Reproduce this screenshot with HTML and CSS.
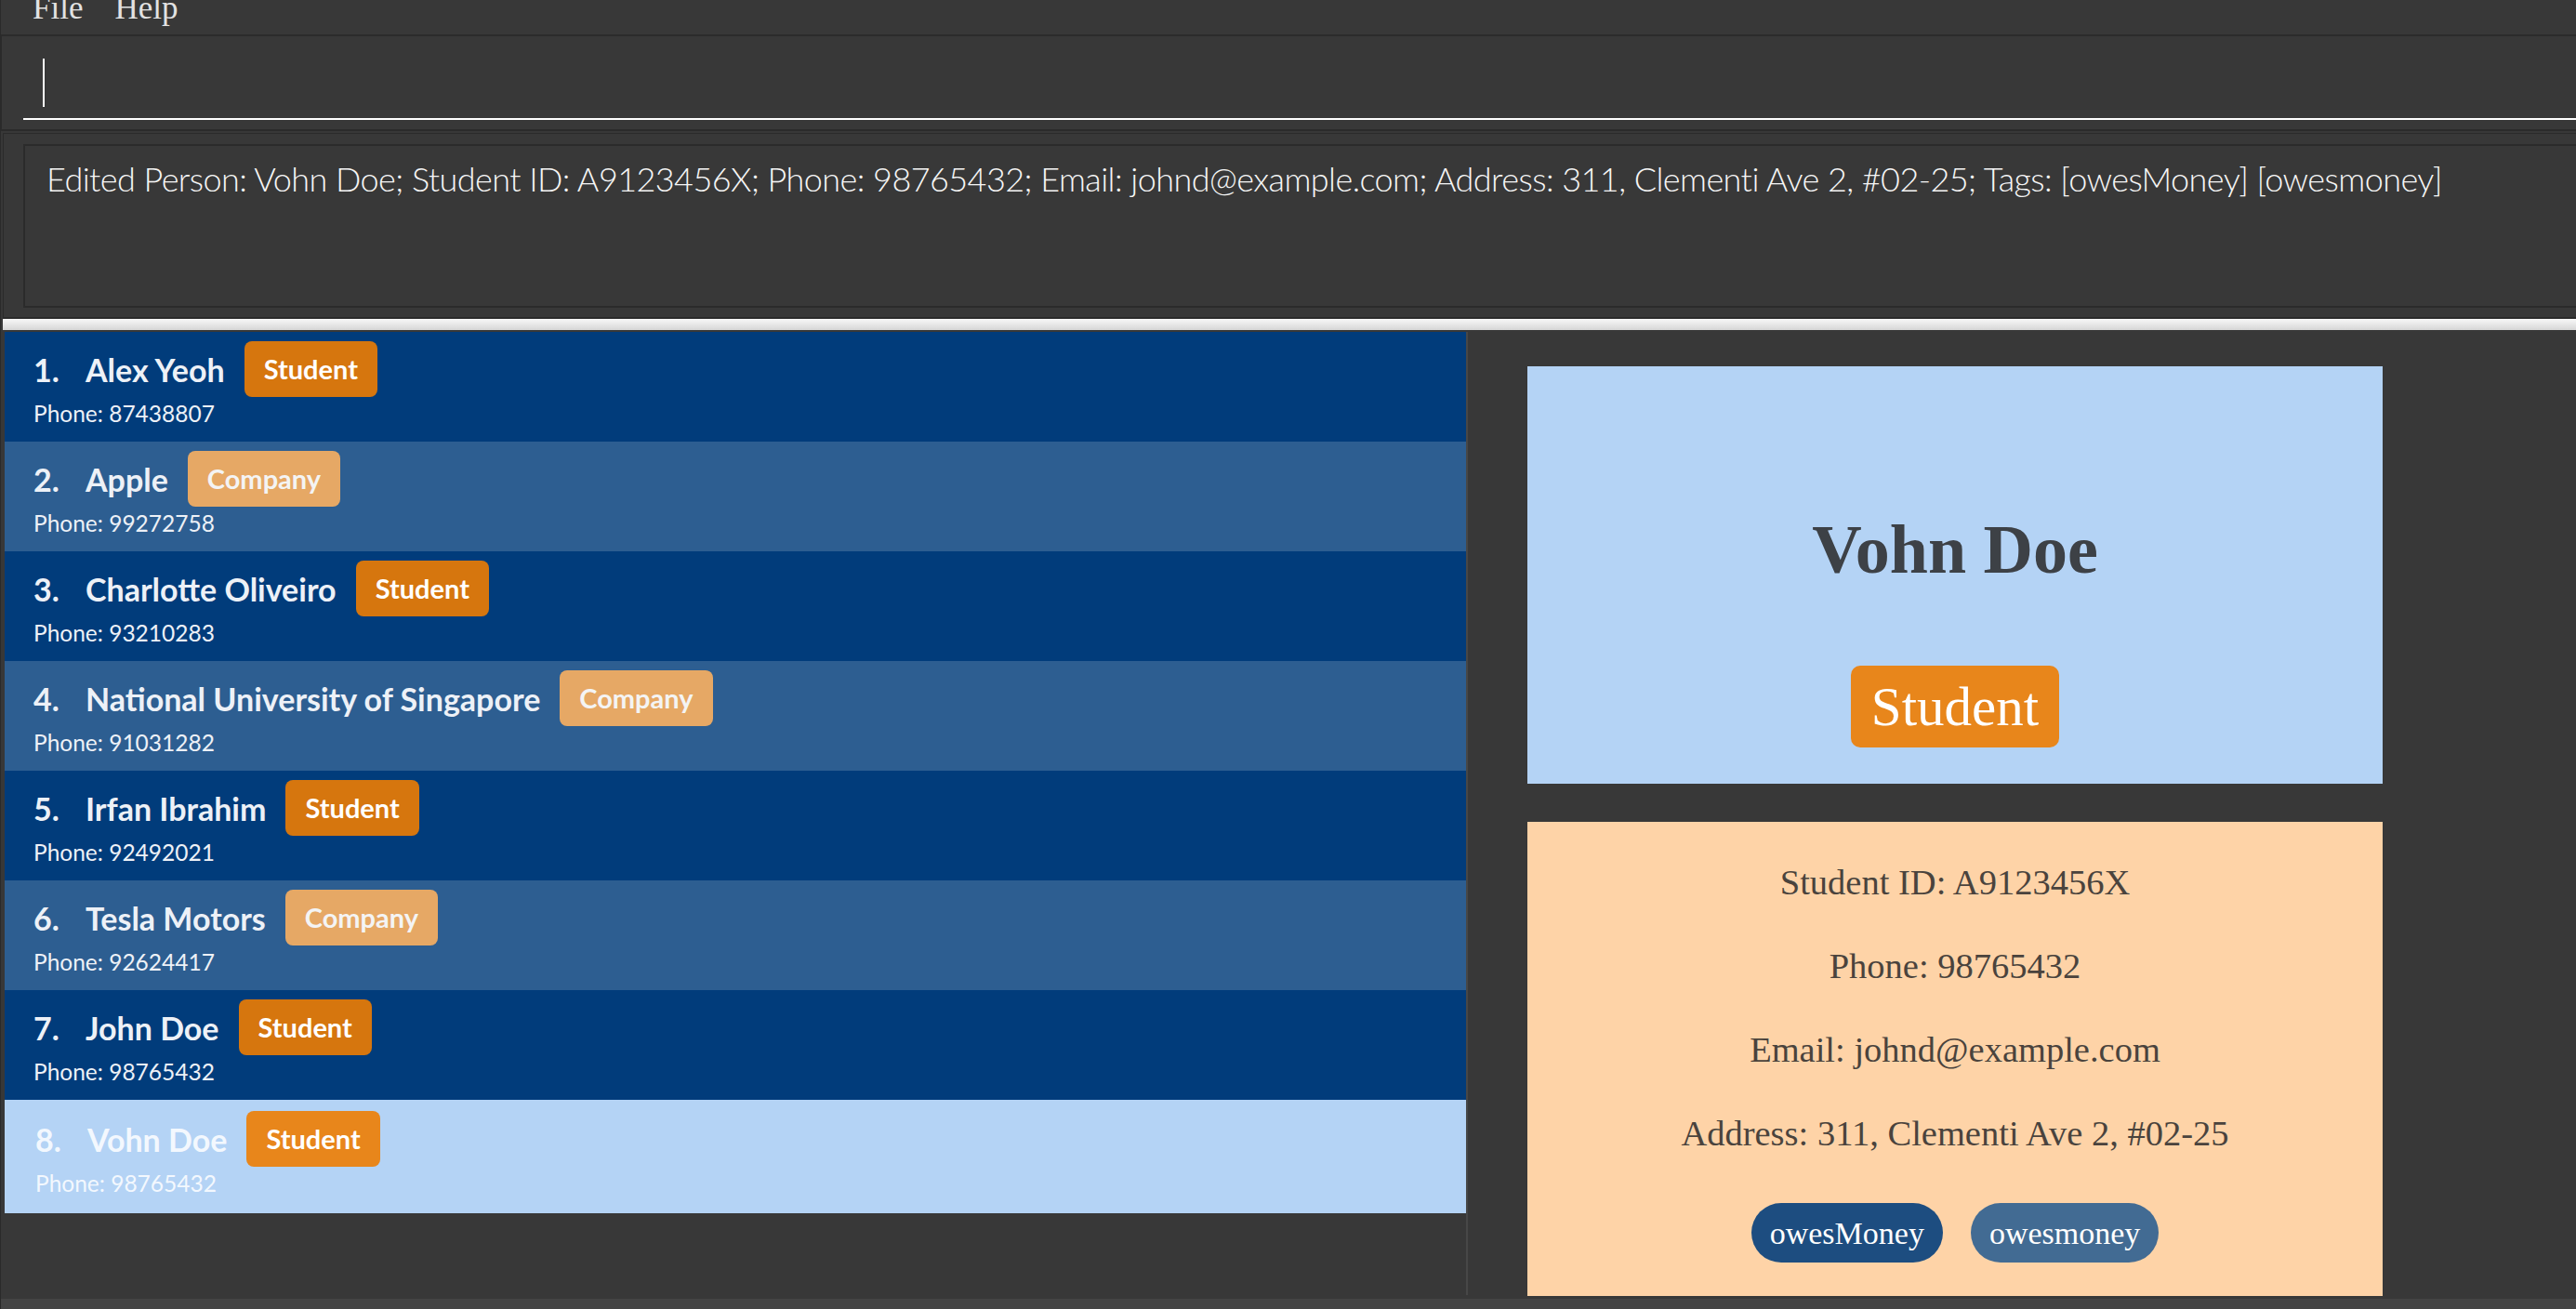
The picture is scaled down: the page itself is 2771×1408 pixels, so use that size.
FILE: index.html
```html
<!DOCTYPE html>
<html lang="en">
<head>
<meta charset="utf-8">
<title>Address App</title>
<link rel="stylesheet" href="styles.css">
</head>
<body>
<div class="app">
  <div class="menubar">
    <span class="menu-item">File</span>
    <span class="menu-item">Help</span>
  </div>
  <div class="command-box">
    <div class="command-field"><span class="caret"></span></div>
  </div>
  <div class="result-box">
    <div class="result-inner">Edited Person: Vohn Doe; Student ID: A9123456X; Phone: 98765432; Email: johnd@example.com; Address: 311, Clementi Ave 2, #02-25; Tags: [owesMoney] [owesmoney]</div>
  </div>
  <div class="splitter"></div>
  <div class="main">
    <div class="list-panel">
      <div class="row dark">
        <div class="row-head"><span class="index">1.</span><span class="name">Alex Yeoh</span><span class="badge student">Student</span></div>
        <div class="phone">Phone: 87438807</div>
      </div>
      <div class="row light">
        <div class="row-head"><span class="index">2.</span><span class="name">Apple</span><span class="badge company">Company</span></div>
        <div class="phone">Phone: 99272758</div>
      </div>
      <div class="row dark">
        <div class="row-head"><span class="index">3.</span><span class="name">Charlotte Oliveiro</span><span class="badge student">Student</span></div>
        <div class="phone">Phone: 93210283</div>
      </div>
      <div class="row light">
        <div class="row-head"><span class="index">4.</span><span class="name">National University of Singapore</span><span class="badge company">Company</span></div>
        <div class="phone">Phone: 91031282</div>
      </div>
      <div class="row dark">
        <div class="row-head"><span class="index">5.</span><span class="name">Irfan Ibrahim</span><span class="badge student">Student</span></div>
        <div class="phone">Phone: 92492021</div>
      </div>
      <div class="row light">
        <div class="row-head"><span class="index">6.</span><span class="name">Tesla Motors</span><span class="badge company">Company</span></div>
        <div class="phone">Phone: 92624417</div>
      </div>
      <div class="row dark">
        <div class="row-head"><span class="index">7.</span><span class="name">John Doe</span><span class="badge student">Student</span></div>
        <div class="phone">Phone: 98765432</div>
      </div>
      <div class="row selected">
        <div class="row-head"><span class="index">8.</span><span class="name">Vohn Doe</span><span class="badge student-selected">Student</span></div>
        <div class="phone">Phone: 98765432</div>
      </div>
    </div>
    <div class="divider"></div>
    <div class="detail-panel">
      <div class="card card-top">
        <div class="detail-name">Vohn Doe</div>
        <div class="detail-badge">Student</div>
      </div>
      <div class="card card-bottom">
        <div class="detail-line">Student ID: A9123456X</div>
        <div class="detail-line">Phone: 98765432</div>
        <div class="detail-line">Email: johnd@example.com</div>
        <div class="detail-line">Address: 311, Clementi Ave 2, #02-25</div>
        <div class="tags">
          <span class="tag tag-dark">owesMoney</span>
          <span class="tag tag-light">owesmoney</span>
        </div>
      </div>
    </div>
  </div>
  <div class="statusbar"></div>
</div>
</body>
</html>
```
FILE: styles.css
```css
* { box-sizing: border-box; }
html, body { margin: 0; padding: 0; }
body {
  background: #383838;
  width: 2771px;
  height: 1408px;
  overflow: hidden;
  font-family: "Lato", "Open Sans", sans-serif;
}
.app {
  height: 1408px;
  display: flex;
  flex-direction: column;
  border-left: 1px solid #2a2a2a;
}
.menubar {
  height: 37px;
  flex: none;
  display: flex;
  gap: 34px;
  padding-left: 34px;
  overflow: hidden;
  font-family: "Liberation Serif", "Times New Roman", serif;
  font-size: 35px;
  color: #e2e2e2;
}
.menu-item { line-height: 35px; margin-top: -9px; }

.command-box {
  flex: none;
  height: 104px;
  border-top: 2px solid #2b2b2b;
  border-bottom: 2px solid #2b2b2b;
  border-left: 1px solid #2b2b2b;
  padding-left: 23px;
}
.command-field {
  height: 90px;
  border-bottom: 2px solid #ffffff;
  padding: 24px 0 0 21px;
}
.caret { display: block; width: 2px; height: 52px; background: #ffffff; }

.result-box {
  flex: none;
  margin: 2px 0 0 2px;
  border-top: 1px solid #2b2b2b;
  border-left: 1px solid #2b2b2b;
  border-bottom: 2px solid #2b2b2b;
  padding: 11px 0 10px 21px;
}
.result-inner {
  height: 176px;
  border: 2px solid #2b2b2b;
  border-right: none;
  padding: 13px 0 0 23px;
  font-size: 36px;
  line-height: 44px;
  font-weight: 300;
  letter-spacing: -0.57px;
  color: #f6f6f6;
  white-space: nowrap;
  overflow: hidden;
}
.splitter {
  flex: none;
  height: 12px;
  margin: 0 0 2px 2px;
  background: linear-gradient(#f8f8f8, #d6d6d6);
}

.main {
  flex: 1;
  min-height: 0;
  display: flex;
  padding-left: 4px;
}
.list-panel { width: 1572px; flex: none; }
.divider { width: 2px; flex: none; background: #474747; margin-bottom: 4px; }
.detail-panel { flex: 1; padding: 37px 0 0 64px; }

.row {
  height: 118px;
  padding: 10px 0 0 31px;
  color: #edf1f7;
}
.row.dark { background: #013c7b; }
.row.light { background: #2d5e91; }
.row.selected {
  height: 122px;
  padding: 12px 0 0 33px;
  background: #b4d3f5;
  color: #f3f8fe;
}
.row-head { display: flex; align-items: center; height: 60px; }
.index { width: 56px; font-size: 34px; font-weight: 700; }
.name { font-size: 34px; font-weight: 700; }
.badge {
  margin-left: 21px;
  height: 60px;
  line-height: 60px;
  padding: 0 21px;
  border-radius: 8px;
  font-size: 29px;
  font-weight: 700;
  color: #ffffff;
}
.badge.student { background: #d6760e; }
.badge.company { background: #e6a865; color: #f4f4f4; }
.badge.student-selected { background: #e8861b; }
.phone { margin-top: 3px; font-size: 24.5px; line-height: 30px; }

.card {
  width: 920px;
  font-family: "Liberation Serif", "Times New Roman", serif;
  display: flex;
  flex-direction: column;
  align-items: center;
}
.card-top {
  height: 449px;
  background: #b4d3f5;
  padding-top: 157px;
}
.detail-name {
  font-size: 74px;
  font-weight: 700;
  line-height: 80px;
  color: #3d4146;
}
.detail-badge {
  margin-top: 85px;
  height: 88px;
  line-height: 88px;
  padding: 0 22px;
  border-radius: 10px;
  background: #e8861b;
  color: #ffffff;
  font-size: 59px;
}
.card-bottom {
  margin-top: 41px;
  height: 510px;
  background: #fed3a7;
  padding-top: 43px;
  gap: 46px;
  color: #4a433d;
  font-size: 38.5px;
  line-height: 44px;
}
.tags { display: flex; gap: 30px; margin-top: 7px; }
.tag {
  height: 64px;
  line-height: 66px;
  padding: 0 20px;
  border-radius: 32px;
  font-size: 34px;
  color: #ffffff;
}
.tag-dark { background: #1d4d80; }
.tag-light { background: #426b93; }

.statusbar { flex: none; height: 11px; background: #444444; }
```
